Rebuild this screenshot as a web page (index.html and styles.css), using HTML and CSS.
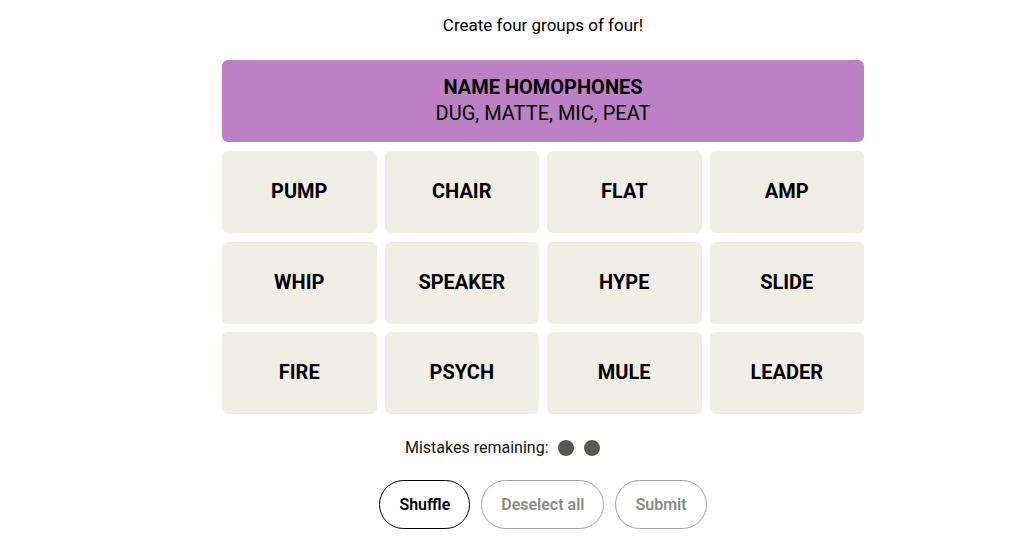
FILE: index.html
```
<!DOCTYPE html>
<html>
<head>
<meta charset="utf-8">
<link rel="stylesheet" href="styles.css">
</head>
<body>
<main class="game">
  <p class="prompt">Create four groups of four!</p>
  <div class="board">
    <div class="solved">
      <div class="solved-title">NAME HOMOPHONES</div>
      <div class="solved-words">DUG, MATTE, MIC, PEAT</div>
    </div>
    <div class="grid">
      <div class="tile">PUMP</div>
      <div class="tile">CHAIR</div>
      <div class="tile">FLAT</div>
      <div class="tile">AMP</div>
      <div class="tile">WHIP</div>
      <div class="tile">SPEAKER</div>
      <div class="tile">HYPE</div>
      <div class="tile">SLIDE</div>
      <div class="tile">FIRE</div>
      <div class="tile">PSYCH</div>
      <div class="tile">MULE</div>
      <div class="tile">LEADER</div>
    </div>
  </div>
  <div class="mistakes">
    <span>Mistakes remaining:</span>
    <span class="dots"><span class="dot"></span><span class="dot"></span></span>
  </div>
  <div class="actions">
    <button class="btn btn-active">Shuffle</button>
    <button class="btn btn-disabled">Deselect all</button>
    <button class="btn btn-disabled">Submit</button>
  </div>
</main>
</body>
</html>
```
FILE: styles.css
```
* { box-sizing: border-box; }
html, body { margin: 0; padding: 0; background: #fff; }
body { font-family: "Roboto", "Liberation Sans", sans-serif; color: #000; }
.game {
  margin-left: 222px;
  width: 642px;
  display: flex;
  flex-direction: column;
  align-items: center;
}
.prompt {
  margin: 14px 0 0;
  font-size: 17px;
  line-height: 22px;
  height: 22px;
}
.board {
  margin-top: 24px;
  width: 642px;
  display: flex;
  flex-direction: column;
  gap: 9px;
}
.solved {
  height: 82px;
  background: #bc80c4;
  border-radius: 6px;
  display: flex;
  flex-direction: column;
  align-items: center;
  justify-content: center;
  padding-bottom: 2px;
  font-size: 20px;
  line-height: 26px;
}
.solved-title { font-weight: 700; }
.solved-words { font-weight: 400; }
.grid {
  display: grid;
  grid-template-columns: repeat(4, 1fr);
  grid-auto-rows: 82px;
  column-gap: 8px;
  row-gap: 8.5px;
}
.tile {
  background: #efefe6;
  border-radius: 6px;
  display: flex;
  align-items: center;
  justify-content: center;
  padding-bottom: 2px;
  font-size: 20px;
  font-weight: 700;
}
.mistakes {
  align-self: flex-start;
  margin: 24px 0 0 183px;
  display: flex;
  align-items: center;
  gap: 9px;
  font-size: 16px;
  line-height: 20px;
  color: #121212;
}
.dots { display: flex; gap: 10px; }
.dot {
  width: 16px;
  height: 16px;
  border-radius: 50%;
  background: #5a594e;
}
.actions {
  margin-top: 22px;
  display: flex;
  gap: 11px;
}
.btn {
  height: 49px;
  border-radius: 25px;
  background: #fff;
  font-family: inherit;
  font-size: 16px;
  font-weight: 600;
  padding: 0 19px;
}
.btn-active { border: 1px solid #000; color: #000; }
.btn-disabled { border: 1px solid #a0a0a0; color: #8a8a8a; }
```
